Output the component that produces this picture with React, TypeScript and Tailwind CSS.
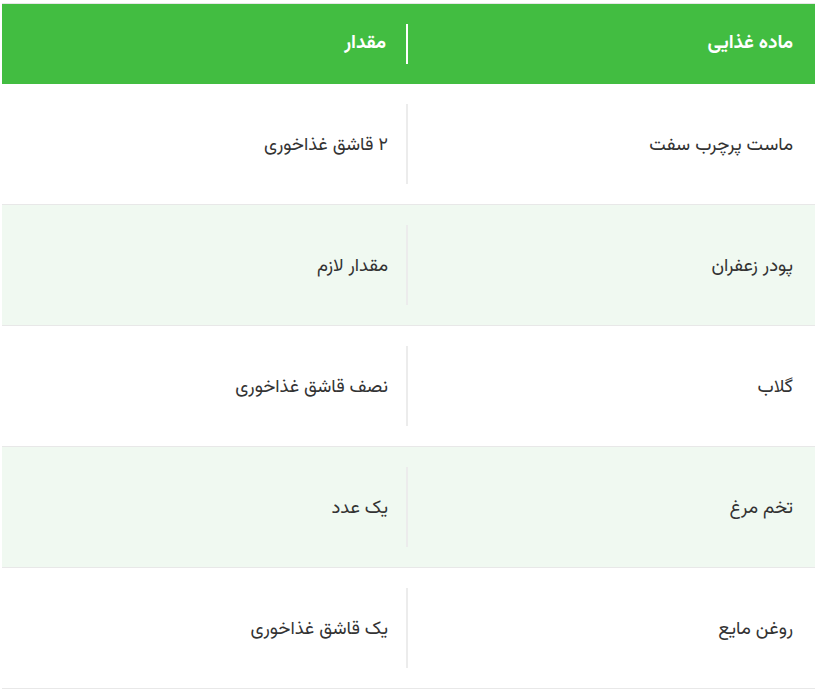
import React from "react";

const rows: [string, string][] = [
  ["ماست پرچرب سفت", "۲ قاشق غذاخوری"],
  ["پودر زعفران", "مقدار لازم"],
  ["گلاب", "نصف قاشق غذاخوری"],
  ["تخم مرغ", "یک عدد"],
  ["روغن مایع", "یک قاشق غذاخوری"],
];

export default function App() {
  return (
    <div
      dir="rtl"
      className="w-[831px] h-[690px] bg-white pt-[3px] pl-[2px] pr-[16px]"
      style={{ fontFamily: '"Vazirmatn", "Noto Sans Arabic", "DejaVu Sans", sans-serif' }}
    >
      <div className="border-t border-[#e6e6e6]">
        <div className="flex h-[80px] bg-[#42bd41] text-white font-bold text-[19px]">
          <div className="w-[407px] shrink-0 flex items-center pr-[22px]">ماده غذایی</div>
          <div className="flex-1 py-[20px]">
            <div className="h-full border-r-2 border-white flex items-center pr-[20px]">مقدار</div>
          </div>
        </div>
        {rows.map(([a, b], i) => (
          <div
            key={i}
            className={`flex h-[121px] border-b border-[#e8e8e8] text-[18.5px] text-[#333333] ${i % 2 === 1 ? "bg-[#f0f9f1]" : "bg-white"}`}
          >
            <div className="w-[407px] shrink-0 flex items-center pr-[22px] pt-[4px]">{a}</div>
            <div className="flex-1 py-[20px]">
              <div className="h-full border-r-2 border-[#ececec] flex items-center pr-[18px] pt-[4px]">{b}</div>
            </div>
          </div>
        ))}
      </div>
    </div>
  );
}
